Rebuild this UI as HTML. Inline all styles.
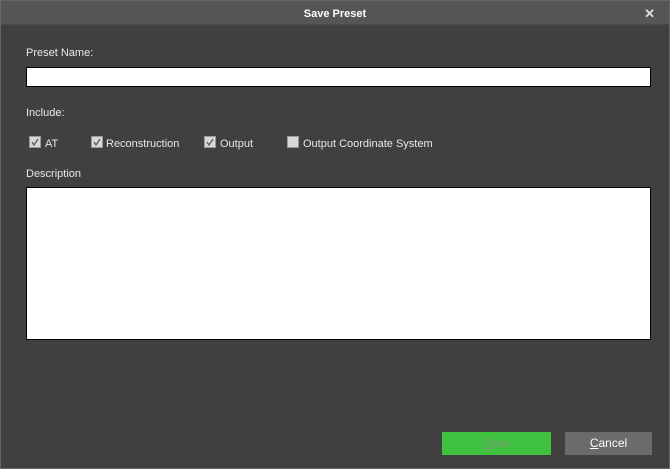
<!DOCTYPE html>
<html><head><style>
body{margin:0;width:670px;height:469px;overflow:hidden;background:#404040;font-family:"Liberation Sans",sans-serif;font-size:11px;color:#e8e8e8;}
.win{position:absolute;left:0;top:0;width:668px;height:467px;border:1px solid #666;background:#404040;}
.title{position:absolute;left:0;top:0;width:668px;height:23px;background:#555;color:#fff;font-weight:bold;font-size:11px;text-align:center;line-height:26px;border-bottom:1px solid #4a4a4a;}
.x{position:absolute;right:14px;top:0;font-size:13px;color:#ddd;font-weight:bold;}
.lbl{position:absolute;left:25px;}
.box{position:absolute;background:#fff;border:1px solid #000;}
.cb{position:absolute;top:135px;width:12px;height:12px;background:#d8d8d8;border:1px solid #999;box-sizing:border-box;}
.cb svg{position:absolute;left:0;top:0}
.ct{position:absolute;top:137px;}
.btn{position:absolute;top:431px;height:23px;text-align:center;line-height:23px;font-size:12px;}
</style></head><body>
<div class="win">
<div class="title">Save Preset<span class="x">✕</span></div>
<div class="lbl" style="top:46px">Preset Name:</div>
<div class="box" style="left:25px;top:66px;width:623px;height:18px"></div>
<div class="lbl" style="top:106px">Include:</div>
<div class="cb" style="left:28px"><svg width="10" height="10"><path d="M2 5 L4 8 L8 2" stroke="#555" stroke-width="1.2" fill="none"/></svg></div>
<div class="ct" style="left:44px">AT</div>
<div class="cb" style="left:90px"><svg width="10" height="10"><path d="M2 5 L4 8 L8 2" stroke="#555" stroke-width="1.2" fill="none"/></svg></div>
<div class="ct" style="left:105px">Reconstruction</div>
<div class="cb" style="left:203px"><svg width="10" height="10"><path d="M2 5 L4 8 L8 2" stroke="#555" stroke-width="1.2" fill="none"/></svg></div>
<div class="ct" style="left:219px">Output</div>
<div class="cb" style="left:286px"></div>
<div class="ct" style="left:302px">Output Coordinate System</div>
<div class="lbl" style="top:167px">Description</div>
<div class="box" style="left:25px;top:186px;width:623px;height:151px"></div>
<div class="btn" style="left:441px;width:109px;background:#3fc13f;color:#7a9a7a"><u>S</u>ave</div>
<div class="btn" style="left:564px;width:87px;background:#6b6b6b;color:#fff"><u>C</u>ancel</div>
</div>
</body></html>
